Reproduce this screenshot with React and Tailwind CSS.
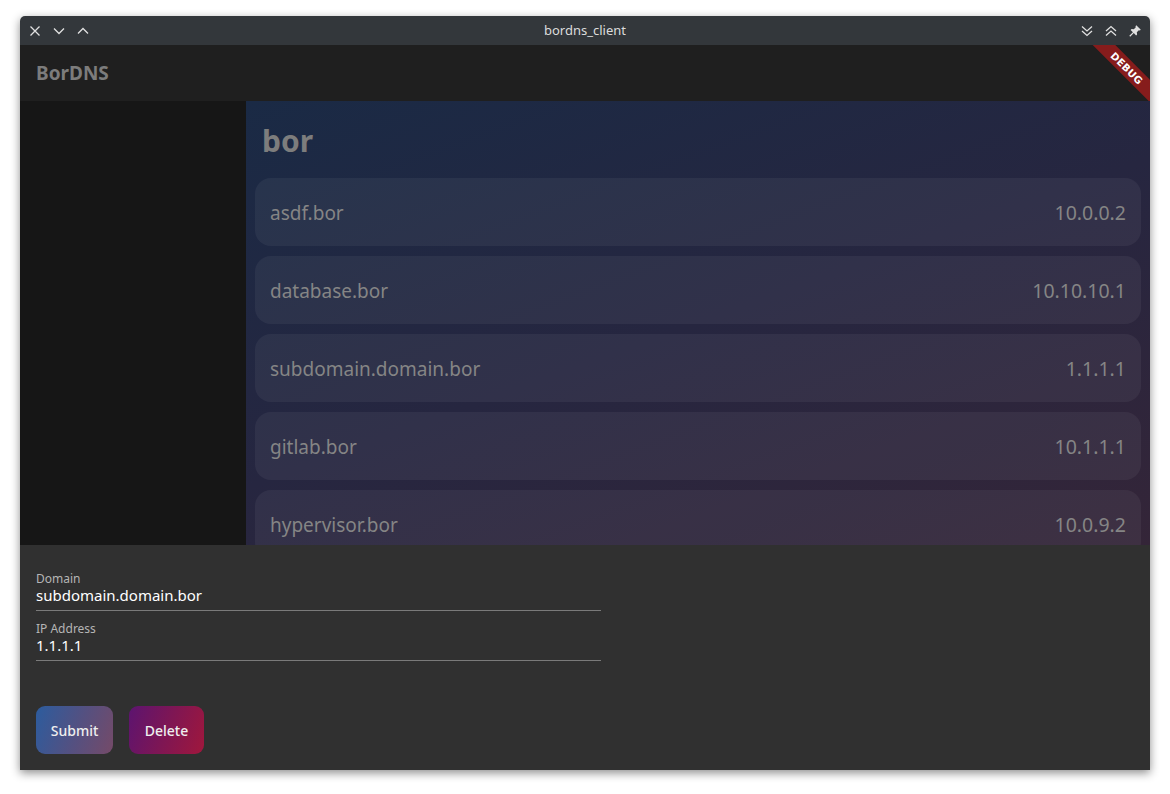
import React from "react";

const rows = [
  ["asdf.bor", "10.0.0.2"],
  ["database.bor", "10.10.10.1"],
  ["subdomain.domain.bor", "1.1.1.1"],
  ["gitlab.bor", "10.1.1.1"],
  ["hypervisor.bor", "10.0.9.2"],
];

export default function App() {
  return (
    <div className="w-[1170px] h-[794px] bg-white pt-[16px] px-[20px] overflow-hidden" style={{ fontFamily: '"Noto Sans", "Open Sans", sans-serif' }}>
      <div className="w-[1130px] h-[754px] flex flex-col rounded-t-[5px] overflow-hidden shadow-[0_3px_10px_rgba(0,0,0,0.45)]">
        {/* title bar */}
        <div className="h-[29px] bg-[#33373b] flex items-center px-[8px] text-[#e6e6e6] shrink-0">
          <div className="flex items-center gap-[10px] w-[90px]">
            <svg width="14" height="14" viewBox="0 0 14 14" fill="none" stroke="#e0e0e0" strokeWidth="1.3"><path d="M2.5 2.5l9 9M11.5 2.5l-9 9" /></svg>
            <svg width="14" height="14" viewBox="0 0 14 14" fill="none" stroke="#e0e0e0" strokeWidth="1.3"><path d="M2 4.5l5 5 5-5" /></svg>
            <svg width="14" height="14" viewBox="0 0 14 14" fill="none" stroke="#e0e0e0" strokeWidth="1.3"><path d="M2 9.5l5-5 5 5" /></svg>
          </div>
          <div className="flex-1 text-center text-[13px] text-[#dcdcdc]">bordns_client</div>
          <div className="flex items-center gap-[10px] w-[90px] justify-end">
            <svg width="14" height="14" viewBox="0 0 14 14" fill="none" stroke="#e0e0e0" strokeWidth="1.3"><path d="M2 2.5l5 4.5 5-4.5M2 7l5 4.5 5-4.5" /></svg>
            <svg width="14" height="14" viewBox="0 0 14 14" fill="none" stroke="#e0e0e0" strokeWidth="1.3"><path d="M2 7l5-4.5 5 4.5M2 11.5l5-4.5 5 4.5" /></svg>
            <svg width="14" height="14" viewBox="0 0 14 14" fill="#e0e0e0"><path d="M8.3 1.2l4.5 4.5-1 .8-1-.3-2 2 .3 2.2-1 1-2.3-2.3L2.2 12.7 1.3 11.8 4.9 8.2 2.6 5.9l1-1 2.2.3 2-2-.3-1z" /></svg>
          </div>
        </div>
        {/* app bar */}
        <div className="relative h-[56px] bg-[#1f1f1f] flex items-center px-[16px] shrink-0 overflow-hidden">
          <span className="text-[19px] font-bold text-[#7c7c7c]">BorDNS</span>
          <div className="absolute top-[15px] right-[-27px] w-[100px] h-[16px] bg-[#861c1c] rotate-45 flex items-center justify-center">
            <span className="text-[10px] font-bold text-white tracking-[0.3px]" style={{ fontFamily: '"DejaVu Sans", sans-serif' }}>DEBUG</span>
          </div>
        </div>
        {/* body */}
        <div className="h-[444px] flex shrink-0">
          <div className="w-[226px] bg-[#161616]" />
          <div className="flex-1 bg-[linear-gradient(160deg,#1a2a45_0%,#262640_50%,#342538_100%)] px-[9px] overflow-hidden">
            <div className="h-[77px] flex items-center pl-[7px] pt-[1px]">
              <span className="text-[30px] font-bold text-[#7d7d7d]">bor</span>
            </div>
            <div className="flex flex-col gap-[10px]">
              {rows.map(([d, ip]) => (
                <div key={d} className="h-[68px] shrink-0 rounded-[16px] bg-white/[0.05] flex items-center justify-between px-[15px] pt-[2px]">
                  <span className="text-[19px] text-[#858585]">{d}</span>
                  <span className="text-[19.5px] text-[#858585]">{ip}</span>
                </div>
              ))}
            </div>
          </div>
        </div>
        {/* bottom form */}
        <div className="flex-1 bg-[#303030] px-[16px] pt-[27px]">
          <div className="w-[565px]">
            <div className="text-[12px] leading-[14px] text-[#b5b5b5]">Domain</div>
            <div className="text-[15px] leading-[19px] text-white pb-[5px] border-b border-[#7a7a7a]">subdomain.domain.bor</div>
            <div className="text-[12px] leading-[14px] text-[#b5b5b5] mt-[11px]">IP Address</div>
            <div className="text-[15px] leading-[19px] text-white pb-[5px] border-b border-[#7a7a7a]">1.1.1.1</div>
          </div>
          <div className="flex gap-[16px] mt-[45px]">
            <button className="h-[48px] w-[77px] rounded-[9px] text-[14px] font-medium text-[#eeeeee] bg-[linear-gradient(110deg,#2c5c9e_0%,#555080_55%,#754a68_100%)]">Submit</button>
            <button className="h-[48px] w-[75px] rounded-[9px] text-[14px] font-medium text-[#eeeeee] bg-[linear-gradient(110deg,#5c1470_0%,#7e1654_50%,#a0173c_100%)]">Delete</button>
          </div>
        </div>
      </div>
    </div>
  );
}
